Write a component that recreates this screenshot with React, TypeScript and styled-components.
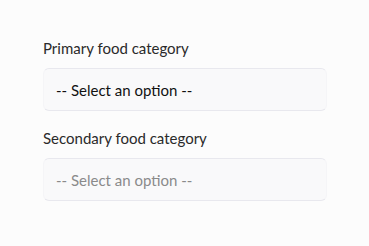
import React from 'react';
import styled, { createGlobalStyle } from 'styled-components';

const GlobalStyle = createGlobalStyle`
  html, body {
    margin: 0;
    padding: 0;
    background: #fcfcfc;
  }
  body {
    font-family: Lato, "Open Sans", sans-serif;
  }
`;

interface Field {
  label: string;
  muted?: boolean;
}

const fields: Field[] = [
  { label: 'Primary food category' },
  { label: 'Secondary food category', muted: true },
];

const App: React.FC = () => {
  return (
    <>
      <GlobalStyle />
      <Form>
        {fields.map((f) => (
          <Group key={f.label}>
            <Label>{f.label}</Label>
            <Select $muted={f.muted} defaultValue="">
              <option value="">-- Select an option --</option>
            </Select>
          </Group>
        ))}
      </Form>
    </>
  );
};

const Form = styled.form`
  display: flex;
  flex-direction: column;
  gap: 18px;
  padding: 39px 0 0 43px;
  width: 284px;
`;

const Group = styled.div`
  display: flex;
  flex-direction: column;
  gap: 11px;
`;

const Label = styled.label`
  font-size: 15px;
  line-height: 18px;
  color: #2a2a2a;
`;

const Select = styled.select<{ $muted?: boolean }>`
  appearance: none;
  -webkit-appearance: none;
  box-sizing: border-box;
  width: 100%;
  height: 43px;
  padding: 0 12px;
  font-family: Lato, "Open Sans", sans-serif;
  font-size: 15px;
  color: ${(p) => (p.$muted ? '#8a8a8a' : '#111111')};
  background: #f9f9fa;
  border: 1px solid #e8e8ee;
  border-left-color: #f5f5f7;
  border-right-color: #f5f5f7;
  border-radius: 6px;
  outline: none;
`;

export default App;
